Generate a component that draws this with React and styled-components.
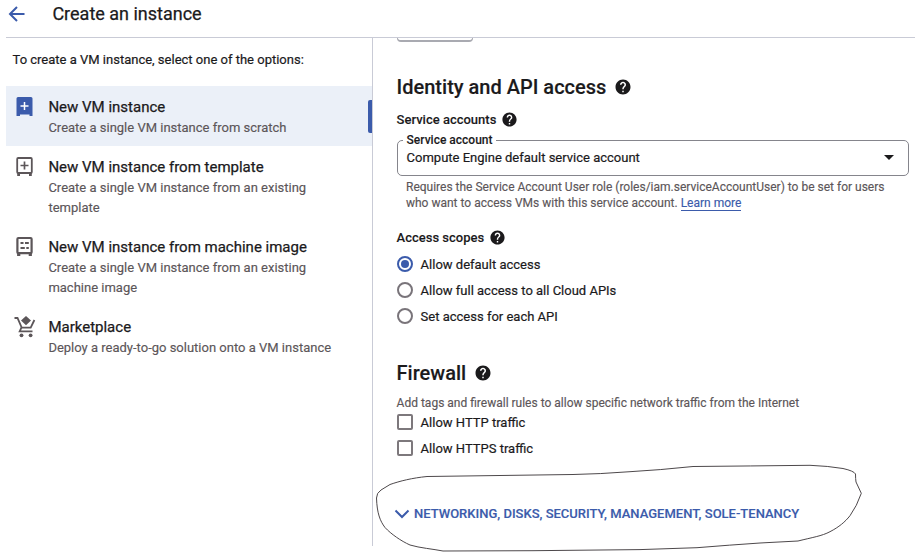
import React from 'react';
import styled, { createGlobalStyle } from 'styled-components';
import { MdHelp } from 'react-icons/md';

const blue = '#3b5bab';
const ink = '#1b1a1c';
const muted = '#5c5659';
const line = '#c9cbd6';

const GlobalStyle = createGlobalStyle`
  * { box-sizing: border-box; }
  body {
    margin: 0;
    overflow: hidden;
    background: #fff;
    color: ${ink};
    font-family: Roboto, sans-serif;
  }
`;

const Page = styled.div`
  position: relative;
  display: flex;
  flex-direction: column;
  width: 915px;
  height: 559px;
`;

const Header = styled.header`
  display: flex;
  align-items: center;
  flex: none;
  height: 38px;
  margin-left: 6px;
  padding: 0 0 10px 2px;
  border-bottom: 1px solid ${line};
`;

const PageTitle = styled.h1`
  margin: 0 0 0 26.4px;
  font-size: 18px;
  font-weight: 400;
  line-height: 28px;
  -webkit-text-stroke: 0.25px ${ink};
`;

const Body = styled.div`
  display: flex;
  height: 508px;
`;

const Sidebar = styled.nav`
  width: 373px;
  padding: 12px 0 0 6px;
  border-right: 1px solid ${line};
`;

const Prompt = styled.p`
  margin: 0 0 16px 6.5px;
  font-size: 13px;
  line-height: 20px;
  -webkit-text-stroke: 0.2px ${ink};
`;

const Option = styled.div`
  display: flex;
  position: relative;
  height: ${(p) => p.$height}px;
  padding: 10px 40px 0 8px;
  background: ${(p) => (p.$active ? '#ebf0f8' : 'transparent')};
`;

const ActiveBar = styled.span`
  position: absolute;
  top: 14px;
  right: 0;
  width: 4px;
  height: 33px;
  border-radius: 2px 0 0 2px;
  background: ${blue};
`;

const IconSlot = styled.span`
  flex: none;
  width: 34.4px;
  height: 24px;
  color: ${(p) => (p.$active ? blue : muted)};
  svg { display: block; }
`;

const OptionLabel = styled.div`
  padding-top: 1px;
`;

const OptionTitle = styled.div`
  margin-bottom: 1px;
  font-size: 15px;
  line-height: 20px;
  white-space: nowrap;
  -webkit-text-stroke: 0.25px ${ink};
`;

const OptionText = styled.div`
  width: 290px;
  font-size: 13px;
  line-height: 20px;
  color: ${muted};
  -webkit-text-stroke: 0.15px ${muted};
`;

const Main = styled.main`
  flex: 1;
  padding: 0 6px 0 23.6px;
`;

const ClippedButton = styled.div`
  width: 76px;
  height: 4px;
  border: 1px solid #a9aab1;
  border-top: 0;
  border-bottom-width: 2px;
  border-radius: 0 0 4px 4px;
`;

const Heading = styled.h2`
  display: flex;
  align-items: center;
  gap: 7.4px;
  margin: ${(p) => p.$top}px 0 0;
  font-size: 20px;
  font-weight: 500;
  line-height: 24px;
  -webkit-text-stroke: 0.15px ${ink};
`;

const Label = styled.h3`
  display: flex;
  align-items: center;
  gap: 4.4px;
  margin: ${(p) => p.$top}px 0 0;
  font-size: 13px;
  font-weight: 500;
  line-height: 20px;
  -webkit-text-stroke: 0.1px ${ink};
  svg { margin-top: -1px; }
`;

const Select = styled.div`
  position: relative;
  display: flex;
  align-items: center;
  justify-content: space-between;
  width: 512px;
  height: 36px;
  margin-top: 10px;
  padding: 0 14px 1px 9px;
  border: 1px solid #85858c;
  border-radius: 5px;
  font-size: 13px;
  line-height: 16px;
  -webkit-text-stroke: 0.2px ${ink};
`;

const Legend = styled.span`
  position: absolute;
  top: -8px;
  left: 5px;
  padding: 0 4px;
  background: #fff;
  font-size: 12px;
  font-weight: 500;
  line-height: 14px;
  -webkit-text-stroke: 0.1px ${ink};
`;

const Helper = styled.div`
  margin: ${(p) => p.$top}px 0 0 ${(p) => p.$indent || 0}px;
  font-size: 12px;
  line-height: 16px;
  color: ${muted};
  -webkit-text-stroke: 0.15px ${muted};
`;

const HelperLine = styled.div`
  display: flex;
  gap: 3px;
  height: 16px;
  white-space: nowrap;
`;

const Link = styled.a`
  height: 16px;
  color: ${blue};
  border-bottom: 1px solid ${blue};
  -webkit-text-stroke: 0.15px ${blue};
`;

const Choices = styled.div`
  margin-top: ${(p) => p.$top || 0}px;
`;

const Choice = styled.div`
  display: flex;
  align-items: center;
  gap: 8px;
  height: 26px;
  font-size: 13px;
  -webkit-text-stroke: 0.2px ${ink};
`;

const Radio = styled.span`
  display: grid;
  place-items: center;
  width: 16px;
  height: 16px;
  border: 2px solid ${(p) => (p.$checked ? blue : '#79747a')};
  border-radius: 50%;
  &::after {
    content: '';
    width: 8px;
    height: 8px;
    border-radius: 50%;
    background: ${(p) => (p.$checked ? blue : 'transparent')};
  }
`;

const CheckBox = styled.span`
  width: 16px;
  height: 16px;
  border: 2px solid #7d787c;
  border-radius: 2px;
`;

const Expander = styled.div`
  display: flex;
  align-items: center;
  margin-top: 43px;
  font-size: 13px;
  font-weight: 500;
  line-height: 20px;
  color: ${blue};
  -webkit-text-stroke: 0.15px ${blue};
  svg { margin: 0 4.400px 0 -3px; }
`;

const Scribble = styled.svg`
  position: absolute;
  inset: 0;
  pointer-events: none;
`;

const BackIcon = () => (
  <svg width="18" height="18" viewBox="0 0 18 18" fill="none" stroke={blue} strokeWidth="2">
    <path d="M16.500 9H2.200M9 2L2 9l7 7" />
  </svg>
);

const VmIcon = () => (
  <svg width="20" height="22" viewBox="0 0 20 22">
    <path fill="currentColor" d="M4 1h13q1.500 0 1.500 1.500V20h-3v-1.500H6V20H2.500V2.500Q2.500 1 4 1z" />
    <path stroke="#fff" strokeWidth="1.500" d="M10.500 6v8M6.500 10h8" />
  </svg>
);

const TemplateIcon = () => (
  <svg width="20" height="22" viewBox="0 0 20 22" fill="none" stroke="currentColor">
    <rect x="3.200" y="2" width="14.600" height="15" rx="1" strokeWidth="1.800" />
    <path strokeWidth="1.700" d="M10.500 5.500v8M6.500 9.500h8" />
    <path strokeWidth="2.800" d="M4.600 17v3M16.400 17v3" />
  </svg>
);

const MachineIcon = () => (
  <svg width="20" height="22" viewBox="0 0 20 22" fill="none" stroke="currentColor">
    <rect x="3.400" y="2" width="14.200" height="15.200" rx="1" strokeWidth="2.200" />
    <path strokeWidth="2" d="M6.500 7h3M11 7h3.800M6.500 12h4.300M12.300 12h2.500" />
    <path strokeWidth="3.200" d="M4.700 17v3M16.300 17v3" />
  </svg>
);

const MarketIcon = () => (
  <svg width="22" height="24" viewBox="0 0 22 24" fill="none" stroke="currentColor">
    <path strokeWidth="1.800" d="M.5 2h3l4.200 9.700h9L20.400 4" />
    <path strokeWidth="1.800" d="M7.400 11.700l-1.700 3.700h12.800" />
    <path fill="currentColor" stroke="none" d="M12 0l5 4.500-5 4.700-5-4.700z" />
    <circle cx="7.500" cy="19.300" r="1.900" fill="currentColor" stroke="none" />
    <circle cx="16.600" cy="19.300" r="1.900" fill="currentColor" stroke="none" />
  </svg>
);

const options = [
  { title: 'New VM instance', text: 'Create a single VM instance from scratch', Icon: VmIcon, height: 60, active: true },
  { title: 'New VM instance from template', text: 'Create a single VM instance from an existing template', Icon: TemplateIcon, height: 80 },
  { title: 'New VM instance from machine image', text: 'Create a single VM instance from an existing machine image', Icon: MachineIcon, height: 80 },
  { title: 'Marketplace', text: 'Deploy a ready-to-go solution onto a VM instance', Icon: MarketIcon, height: 60 },
];

const scopes = ['Allow default access', 'Allow full access to all Cloud APIs', 'Set access for each API'];
const rules = ['Allow HTTP traffic', 'Allow HTTPS traffic'];

export default function App() {
  return (
    <Page>
      <GlobalStyle />
      <Header>
        <BackIcon />
        <PageTitle>Create an instance</PageTitle>
      </Header>
      <Body>
        <Sidebar>
          <Prompt>To create a VM instance, select one of the options:</Prompt>
          {options.map(({ title, text, Icon, height, active }) => (
            <Option key={title} $height={height} $active={active}>
              <IconSlot $active={active}><Icon /></IconSlot>
              <OptionLabel>
                <OptionTitle>{title}</OptionTitle>
                <OptionText>{text}</OptionText>
              </OptionLabel>
              {active && <ActiveBar />}
            </Option>
          ))}
        </Sidebar>
        <Main>
          <ClippedButton />
          <Heading $top={33}>Identity and API access <MdHelp size={18} /></Heading>
          <Label $top={11}>Service accounts <MdHelp size={17} /></Label>
          <Select>
            <Legend>Service account</Legend>
            Compute Engine default service account
            <svg width="10" height="5" viewBox="0 0 10 5"><path d="M0 0h10L5 5z" fill={ink} /></svg>
          </Select>
          <Helper $top={3} $indent={9.4}>
            <HelperLine>Requires the Service Account User role (roles/iam.serviceAccountUser) to be set for users</HelperLine>
            <HelperLine>
              <span>who want to access VMs with this service account.</span>
              <Link>Learn more</Link>
            </HelperLine>
          </Helper>
          <Label $top={17}>Access scopes <MdHelp size={17} /></Label>
          <Choices $top={3}>
            {scopes.map((s, i) => (
              <Choice key={s}><Radio $checked={i === 0} />{s}</Choice>
            ))}
          </Choices>
          <Heading $top={32}>Firewall <MdHelp size={18} /></Heading>
          <Helper $top={10}>Add tags and firewall rules to allow specific network traffic from the Internet</Helper>
          <Choices $top={-2}>
            {rules.map((r) => (
              <Choice key={r}><CheckBox />{r}</Choice>
            ))}
          </Choices>
          <Expander>
            <svg width="16" height="10" viewBox="0 0 16 10" fill="none" stroke={blue} strokeWidth="2">
              <path d="M1.500 1.500L8 8l6.500-6.500" />
            </svg>
            NETWORKING, DISKS, SECURITY, MANAGEMENT, SOLE-TENANCY
          </Expander>
        </Main>
      </Body>
      <Scribble width="915" height="559" fill="none" stroke="#4d484b" strokeWidth="1">
        <path d="M427 476.500C412 478 400 481 390 484.500L381 490Q376.500 493 376.500 498C377 513 380 521 385 527.500C391 534 401 541 410 545C420 548 433 549 443 551L533 550.700L640 549.600L697 547.700Q730 545 760 543L798 541C812 537.500 822 536 830 531.700C839 527 845 522 850 515.700Q857 506 861.300 493.300L856 482Q855.500 479 855.500 474Q854 471 843 468.500Q828 466 810 465.300Q750 466 693 466.500Q660 470 630 471.700Q600 474 573 474.500Q500 475.500 427 476.500z" />
      </Scribble>
    </Page>
  );
}
